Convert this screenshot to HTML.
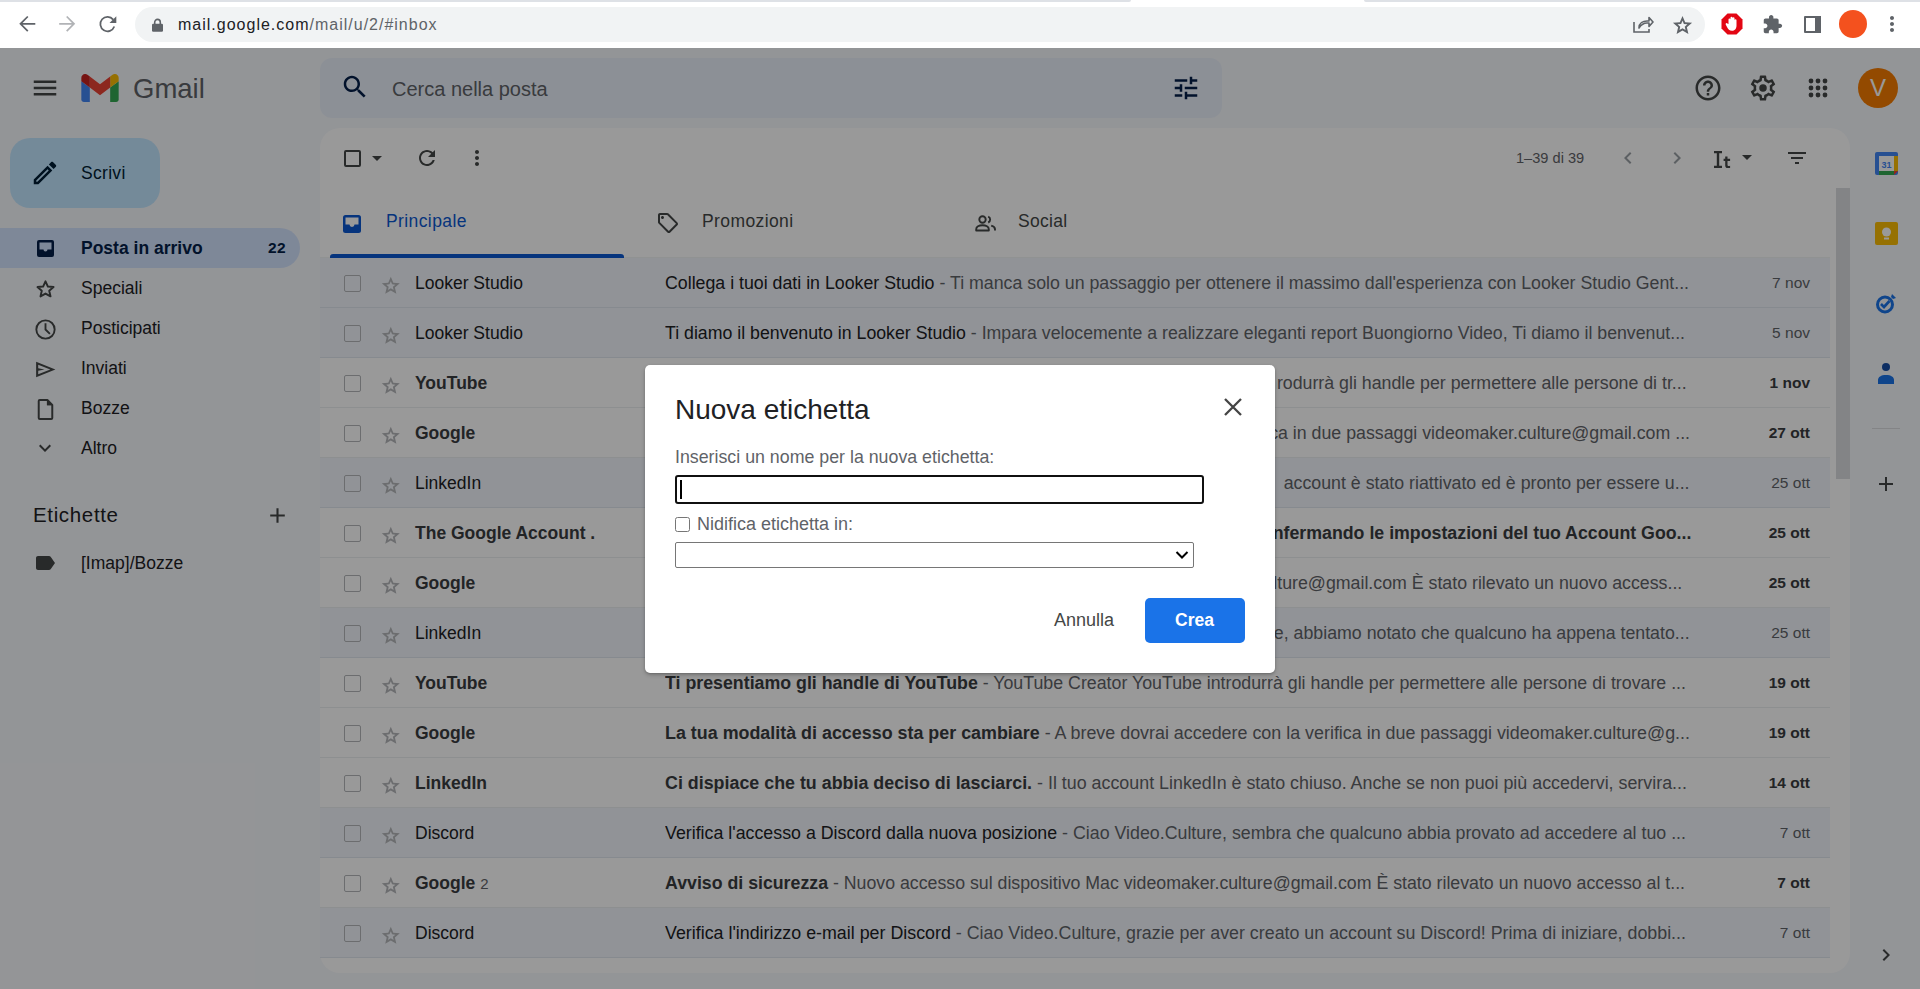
<!DOCTYPE html><html><head><meta charset="utf-8"><title>Gmail</title><style>
*{box-sizing:border-box}
html,body{margin:0;padding:0;width:1920px;height:989px;overflow:hidden;background:#f6f8fc;font-family:"Liberation Sans",sans-serif}
.t{position:absolute;white-space:nowrap;line-height:1}
.abs{position:absolute}
.row{position:absolute;left:320px;width:1510px;height:50px;box-shadow:inset 0 -1px 0 0 rgba(100,121,143,0.122)}
.row.r{background:rgba(242,246,252,1)}
.row.u{background:#fff}
.sn{position:absolute;white-space:nowrap;line-height:1;font-size:17.5px;transform-origin:0 0}
</style></head><body>
<div class="abs" style="left:0;top:0;width:1920px;height:48px;background:#fff"></div>
<div class="abs" style="left:0;top:0;width:1131px;height:2px;background:#dee1e6;border-bottom-right-radius:2px"></div>
<div class="abs" style="left:1364px;top:0;width:556px;height:2px;background:#dee1e6;border-bottom-left-radius:2px"></div>
<svg class="abs" style="left:0;top:0;width:130px;height:48px" viewBox="0 0 130 48" fill="none" stroke-width="1.75"><path d="M35.3 23.8H21.5M27.8 16.5l-7.3 7.3 7.3 7.3" stroke="#5f6368"/><path d="M59.2 23.8H73M66.7 16.5l7.3 7.3-7.3 7.3" stroke="#b1b3b6"/><path d="M114.3 26.5A7.2 7.2 0 1 1 113.2 19.6" stroke="#5f6368"/><path d="M116.3 16.2v6.8h-6.8z" fill="#5f6368"/></svg>
<div class="abs" style="left:135px;top:7px;width:1570px;height:35px;border-radius:17.5px;background:#f1f3f4"></div>
<svg class="abs" style="left:152px;top:18px;width:11px;height:14px" viewBox="0 0 11 14"><path d="M2.7 6V4.2a2.8 2.8 0 0 1 5.6 0V6" fill="none" stroke="#5f6368" stroke-width="1.6"/><rect x="0" y="5.8" width="11" height="8" rx="1.2" fill="#5f6368"/></svg>
<div class="t" style="left:178px;top:17.26px;font-size:16px;color:#202124;letter-spacing:1.0px;">mail.google.com<span style="color:#5f6368">/mail/u/2/#inbox</span></div>
<svg class="abs" style="left:1632px;top:14px;width:22px;height:20px" viewBox="0 0 22 20" fill="none" stroke="#5f6368" stroke-width="1.6"><path d="M2 8v10h15v-3"/><path d="M7 14c0-5 4-7 8-7h2V3.5l4 4.5-4 4.5V9h-2c-3 0-6 2-8 5z" stroke-linejoin="round"/></svg>
<svg class="abs" style="left:1671px;top:12.5px;width:23px;height:23px" viewBox="0 0 24 24" fill="#5f6368"><path fill-rule="evenodd" d="M8.85 17.825l3.15-1.9 3.150 1.925-.825-3.6 2.775-2.4-3.65-.325-1.45-3.4-1.45 3.375-3.65.325 2.775 2.425zM5.825 22l1.625-7.025L2 10.25l7.2-.625L12 3l2.8 6.625 7.2.625-5.45 4.725L18.175 22 12 18.275z"/></svg>
<svg class="abs" style="left:1721px;top:13px;width:22px;height:22px" viewBox="0 0 22 22"><polygon points="6.5,0.5 15.5,0.5 21.5,6.5 21.5,15.5 15.5,21.5 6.5,21.5 0.5,15.5 0.5,6.5" fill="#e30613"/><path d="M7.5 11V6.5a1 1 0 0 1 2 0V10V4.8a1 1 0 0 1 2 0V10V5.3a1 1 0 0 1 2 0V10.5V7.3a1 1 0 0 1 2 0v5.5c0 3-2 5-4.5 5S7 16 6 14l-1.3-2.6a1 1 0 0 1 1.7-1z" fill="#fff"/></svg>
<svg style="position:absolute;left:1762px;top:13.5px;width:21px;height:21px;" viewBox="0 0 24 24" fill="#5f6368"><path d="M20.5 11H19V7c0-1.1-.9-2-2-2h-4V3.5C13 2.12 11.88 1 10.5 1S8 2.12 8 3.5V5H4c-1.1 0-1.99.9-1.99 2v3.8H3.5c1.49 0 2.7 1.21 2.7 2.7s-1.21 2.7-2.7 2.7H2V20c0 1.1.9 2 2 2h3.8v-1.5c0-1.49 1.21-2.7 2.7-2.7 1.49 0 2.7 1.21 2.7 2.7V22H17c1.1 0 2-.9 2-2v-4h1.5c1.38 0 2.5-1.12 2.5-2.5S21.88 11 20.5 11z"/></svg>
<div class="abs" style="left:1804px;top:16px;width:17px;height:17px;border:2.2px solid #5f6368;border-radius:1px"></div><div class="abs" style="left:1815px;top:16px;width:6px;height:17px;background:#5f6368"></div>
<div class="abs" style="left:1839px;top:10px;width:28px;height:28px;border-radius:50%;background:#f4511e"></div>
<svg style="position:absolute;left:1880px;top:12px;width:24px;height:24px;" viewBox="0 0 24 24" fill="#5f6368"><path d="M12 8c1.1 0 2-.9 2-2s-.9-2-2-2-2 .9-2 2 .9 2 2 2zm0 2c-1.1 0-2 .9-2 2s.9 2 2 2 2-.9 2-2-.9-2-2-2zm0 6c-1.1 0-2 .9-2 2s.9 2 2 2 2-.9 2-2-.9-2-2-2z"/></svg>
<div class="abs" style="left:0;top:48px;width:1920px;height:941px;background:#f6f8fc"></div>
<svg style="position:absolute;left:30px;top:73px;width:30px;height:30px;" viewBox="0 0 24 24" fill="#444746"><path d="M3 18h18v-2H3v2zm0-5h18v-2H3v2zm0-7v2h18V6H3z"/></svg>
<svg class="abs" style="left:81px;top:74px;width:38px;height:28px" viewBox="52 42 88 66"><path fill="#4285f4" d="M58 108h14V74L52 59v43c0 3.32 2.69 6 6 6"/><path fill="#34a853" d="M120 108h14c3.32 0 6-2.690 6-6V59l-20 15"/><path fill="#fbbc04" d="M120 48v26l20-15v-8c0-7.42-8.47-11.65-14.4-7.2"/><path fill="#ea4335" d="M72 74V48l24 18 24-18v26L96 92"/><path fill="#c5221f" d="M52 51v8l20 15V48l-5.6-4.2c-5.94-4.45-14.4-.22-14.4 7.2"/></svg>
<div class="t" style="left:133px;top:74.72px;font-size:27.5px;color:#5f6368;">Gmail</div>
<div class="abs" style="left:320px;top:58px;width:902px;height:60px;border-radius:12px;background:#eaf1fb"></div>
<svg style="position:absolute;left:340px;top:72px;width:30px;height:30px;" viewBox="0 0 24 24" fill="#041e49"><path d="M15.5 14h-.79l-.28-.27C15.41 12.59 16 11.11 16 9.5 16 5.91 13.09 3 9.5 3S3 5.91 3 9.5 5.91 16 9.5 16c1.61 0 3.09-.59 4.23-1.57l.27.28v.79l5 4.99L20.49 19l-4.99-5zm-6 0C7.01 14 5 11.990 5 9.5S7.01 5 9.5 5 14 7.01 14 9.5 11.99 14 9.5 14z"/></svg>
<div class="t" style="left:392px;top:79.07px;font-size:20px;color:#5f6368;">Cerca nella posta</div>
<svg style="position:absolute;left:1171px;top:73px;width:30px;height:30px;" viewBox="0 0 24 24" fill="#041e49"><path d="M3 17v2h6v-2H3zM3 5v2h10V5H3zm10 16v-2h8v-2h-8v-2h-2v6h2zM7 9v2H3v2h4v2h2V9H7zm14 4v-2H11v2h10zm-6-4h2V7h4V5h-4V3h-2v6z"/></svg>
<svg style="position:absolute;left:1693px;top:73px;width:30px;height:30px;" viewBox="0 0 24 24" fill="#444746"><path d="M11 18h2v-2h-2v2zm1-16C6.48 2 2 6.48 2 12s4.48 10 10 10 10-4.48 10-10S17.520 2 12 2zm0 18c-4.41 0-8-3.59-8-8s3.59-8 8-8 8 3.59 8 8-3.59 8-8 8zm0-14c-2.21 0-4 1.79-4 4h2c0-1.1.9-2 2-2s2 .9 2 2c0 2-3 1.75-3 5h2c0-2.25 3-2.5 3-5 0-2.21-1.79-4-4-4z"/></svg>
<svg style="position:absolute;left:1748px;top:73px;width:30px;height:30px;" viewBox="0 0 24 24" fill="#444746"><path d="M19.43 12.98c.04-.32.07-.64.07-.98 0-.34-.03-.66-.07-.98l2.11-1.65c.19-.15.24-.42.12-.64l-2-3.46c-.09-.16-.26-.25-.44-.25-.06 0-.12.01-.17.03l-2.490 1c-.52-.4-1.08-.73-1.69-.98l-.38-2.65C14.46 2.18 14.25 2 14 2h-4c-.25 0-.46.18-.49.42l-.38 2.65c-.61.25-1.17.59-1.69.98l-2.49-1c-.06-.02-.12-.03-.18-.03-.17 0-.34.09-.43.25l-2 3.46c-.13.22-.07.49.12.64l2.11 1.65c-.04.32-.07.65-.07.98 0 .33.03.66.07.98l-2.11 1.65c-.19.15-.24.42-.12.64l2 3.46c.09.16.26.25.44.25.06 0 .12-.01.17-.03l2.49-1c.52.4 1.08.73 1.69.98l.38 2.65c.03.24.24.42.49.42h4c.25 0 .46-.18.49-.42l.38-2.65c.61-.25 1.17-.59 1.69-.98l2.49 1c.06.02.12.03.18.03.17 0 .34-.09.43-.25l2-3.46c.12-.22.07-.49-.12-.64l-2.11-1.65zm-1.98-1.71c.04.31.05.52.05.73 0 .21-.02.43-.05.73l-.14 1.13.89.7 1.08.84-.7 1.21-1.27-.51-1.04-.42-.9.68c-.43.32-.84.56-1.25.73l-1.06.43-.16 1.13-.2 1.35h-1.4l-.19-1.35-.16-1.13-1.06-.43c-.43-.18-.83-.41-1.23-.71l-.91-.7-1.06.43-1.27.51-.7-1.21 1.08-.84.89-.7-.14-1.13c-.03-.31-.05-.54-.05-.74s.02-.43.05-.73l.14-1.13-.89-.7-1.08-.84.7-1.21 1.27.51 1.04.42.9-.68c.43-.32.84-.56 1.25-.73l1.06-.43.16-1.13.2-1.35h1.39l.19 1.35.16 1.13 1.06.43c.43.18.83.41 1.23.71l.91.7 1.06-.43 1.27-.51.7 1.21-1.07.85-.89.7.14 1.13z"/><circle cx="12" cy="12" r="3"/></svg>
<svg class="abs" style="left:1808px;top:78px;width:20px;height:20px" viewBox="0 0 20 20" fill="#444746"><circle cx="3" cy="3" r="2.4"/><circle cx="3" cy="10" r="2.4"/><circle cx="3" cy="17" r="2.4"/><circle cx="10" cy="3" r="2.4"/><circle cx="10" cy="10" r="2.4"/><circle cx="10" cy="17" r="2.4"/><circle cx="17" cy="3" r="2.4"/><circle cx="17" cy="10" r="2.4"/><circle cx="17" cy="17" r="2.4"/></svg>
<div class="abs" style="left:1858px;top:68px;width:40px;height:40px;border-radius:50%;background:#f57c00"></div>
<div class="t" style="left:1858px;top:76px;width:40px;text-align:center;font-size:24px;color:#fff">V</div>
<div class="abs" style="left:10px;top:138px;width:150px;height:70px;border-radius:20px;background:#c2e7ff"></div>
<svg style="position:absolute;left:30px;top:158px;width:30px;height:30px;" viewBox="0 0 24 24" fill="#001d35"><path d="M3 17.25V21h3.75L17.81 9.94l-3.75-3.75L3 17.25zM5.92 19H5v-.92l9.06-9.06.92.92L5.92 19zM20.71 5.63l-2.34-2.34c-.2-.2-.45-.29-.71-.29s-.51.1-.7.29l-1.83 1.830 3.75 3.75 1.83-1.83c.39-.39.39-1.02 0-1.41z"/></svg>
<div class="t" style="left:81px;top:165.19px;font-size:17.5px;color:#001d35;letter-spacing:0.3px;">Scrivi</div>
<div class="abs" style="left:0;top:228px;width:300px;height:40px;border-radius:0 20px 20px 0;background:#d3e3fd"></div>
<svg class="abs" style="left:36px;top:239px;width:19px;height:19px" viewBox="0 0 19 19"><rect x="1" y="1" width="17" height="17" rx="2" fill="#041e49"/><path d="M3.5 3.5h12v7h-4a2 2 0 0 1-4 0h-4z" fill="#d3e3fd"/></svg>
<div class="t" style="left:81px;top:240.19px;font-size:17.5px;color:#041e49;font-weight:700;">Posta in arrivo</div>
<div class="t" style="left:268px;top:239.88px;font-size:15.5px;color:#041e49;font-weight:700;letter-spacing:0.3px;">22</div>
<svg class="abs" style="left:33px;top:277px;width:25px;height:25px" viewBox="0 0 24 24" fill="none" stroke="#444746" stroke-width="1.9" stroke-linejoin="round"><path d="M12 4.2l2.3 5 5.4.5-4.1 3.6 1.2 5.3L12 15.9l-4.8 2.7 1.2-5.3-4.1-3.6 5.4-.5z"/></svg>
<div class="t" style="left:81px;top:280.19px;font-size:17.5px;color:#202124;">Speciali</div>
<svg class="abs" style="left:33px;top:317px;width:25px;height:25px" viewBox="0 0 24 24" fill="none" stroke="#444746" stroke-width="1.8"><circle cx="12" cy="12" r="8.8"/><path d="M12 6.8V12l3.6 3.6" stroke-linecap="square"/></svg>
<div class="t" style="left:81px;top:320.19px;font-size:17.5px;color:#202124;">Posticipati</div>
<svg class="abs" style="left:33px;top:357px;width:25px;height:25px" viewBox="0 0 24 24" fill="#444746"><path fill-rule="evenodd" d="M3 19.5V4.5L21.5 12zM5 16.5L16.6 12 5 7.5v3.2l6 1.3-6 1.3z"/></svg>
<div class="t" style="left:81px;top:360.19px;font-size:17.5px;color:#202124;">Inviati</div>
<svg class="abs" style="left:33px;top:397px;width:25px;height:25px" viewBox="0 0 24 24" fill="none" stroke="#444746" stroke-width="1.9" stroke-linejoin="round"><path d="M6.5 2.9h7.3l4.7 4.7v12.5a1 1 0 0 1-1 1H6.5a1 1 0 0 1-1-1V3.9a1 1 0 0 1 1-1z"/><path d="M13.3 3v5h5" fill="#444746" stroke="none"/><path d="M13.5 3l5 5h-5z" fill="#444746" stroke="none"/></svg>
<div class="t" style="left:81px;top:400.19px;font-size:17.5px;color:#202124;">Bozze</div>
<svg style="position:absolute;left:33px;top:436px;width:24px;height:24px;" viewBox="0 0 24 24" fill="#444746"><path d="M16.59 8.59L12 13.17 7.41 8.59 6 10l6 6 6-6z"/></svg>
<div class="t" style="left:81px;top:440.19px;font-size:17.5px;color:#202124;">Altro</div>
<div class="t" style="left:33px;top:504.65px;font-size:20.5px;color:#202124;letter-spacing:0.65px;">Etichette</div>
<svg style="position:absolute;left:265px;top:503px;width:25px;height:25px;" viewBox="0 0 24 24" fill="#444746"><path d="M19 13h-6v6h-2v-6H5v-2h6V5h2v6h6v2z"/></svg>
<svg style="position:absolute;left:33px;top:551px;width:24px;height:24px;" viewBox="0 0 24 24" fill="#444746"><path d="M17.63 5.84C17.27 5.33 16.67 5 16 5L5 5.01C3.9 5.010 3 5.9 3 7v10c0 1.1.9 1.99 2 1.99L16 19c.67 0 1.27-.33 1.63-.84L22 12l-4.37-6.16z"/></svg>
<div class="t" style="left:81px;top:555.19px;font-size:17.5px;color:#202124;">[Imap]/Bozze</div>
<div class="abs" style="left:320px;top:128px;width:1530px;height:845px;border-radius:20px;background:#fff"></div>
<div class="abs" style="left:344px;top:150px;width:17px;height:17px;border:2.1px solid #444746;border-radius:2px"></div>
<svg style="position:absolute;left:365px;top:146px;width:24px;height:24px;" viewBox="0 0 24 24" fill="#444746"><path d="M7 10l5 5 5-5z"/></svg>
<svg style="position:absolute;left:415px;top:146px;width:24px;height:24px;" viewBox="0 0 24 24" fill="#444746"><path d="M17.65 6.35C16.2 4.9 14.21 4 12 4c-4.42 0-7.99 3.58-7.99 8s3.57 8 7.990 8c3.73 0 6.84-2.55 7.73-6h-2.08c-.82 2.33-3.04 4-5.65 4-3.31 0-6-2.69-6-6s2.69-6 6-6c1.66 0 3.14.69 4.22 1.78L13 11h7V4l-2.35 2.35z"/></svg>
<svg style="position:absolute;left:465px;top:146px;width:24px;height:24px;" viewBox="0 0 24 24" fill="#444746"><path d="M12 8c1.1 0 2-.9 2-2s-.9-2-2-2-2 .9-2 2 .9 2 2 2zm0 2c-1.1 0-2 .9-2 2s.9 2 2 2 2-.9 2-2-.9-2-2-2zm0 6c-1.1 0-2 .9-2 2s.9 2 2 2 2-.9 2-2-.9-2-2-2z"/></svg>
<div class="t" style="left:1516px;top:151.04px;font-size:14.6px;color:#5f6368;">1–39 di 39</div>
<svg style="position:absolute;left:1616px;top:146px;width:24px;height:24px;" viewBox="0 0 24 24" fill="#9aa0a6"><path d="M15.41 7.41L14 6l-6 6 6 6 1.41-1.41L10.83 12z"/></svg>
<svg style="position:absolute;left:1665px;top:146px;width:24px;height:24px;" viewBox="0 0 24 24" fill="#9aa0a6"><path d="M10 6L8.59 7.41 13.17 12l-4.58 4.59L10 18l6-6z"/></svg>
<svg class="abs" style="left:1713px;top:151px;width:20px;height:17px" viewBox="0 0 20 17" fill="#444746"><path d="M1 0h8v2.2H6.2v12.6H9V17H1v-2.2h2.8V2.2H1z"/><path d="M12.2 5.5h2.3v2.3h2.6v2.1h-2.6v3.8c0 .9.4 1.2 1.2 1.2.5 0 .9-.1 1.4-.2V17c-.6.2-1.2.2-1.9.2-2 0-3-.9-3-3V9.9h-1.6V7.8h1.6z"/></svg>
<svg style="position:absolute;left:1735px;top:144.5px;width:24px;height:24px;" viewBox="0 0 24 24" fill="#444746"><path d="M7 10l5 5 5-5z"/></svg>
<svg style="position:absolute;left:1785px;top:146px;width:24px;height:24px;" viewBox="0 0 24 24" fill="#444746"><path d="M10 18h4v-2h-4v2zM3 6v2h18V6H3zm3 7h12v-2H6v2z"/></svg>
<div class="abs" style="left:1836px;top:188px;width:14px;height:291px;background:#dadce0"></div>
<div class="abs" style="left:320px;top:257px;width:1510px;height:1px;background:#f1f3f4"></div>
<svg class="abs" style="left:343px;top:215px;width:18px;height:18px" viewBox="0 0 18 18"><rect x="0" y="0" width="18" height="18" rx="2.5" fill="#0b57d0"/><path d="M2.5 2.5h13v7h-4a2.5 2.5 0 0 1-5 0h-4z" fill="#fff"/></svg>
<div class="t" style="left:386px;top:213.39px;font-size:17.5px;color:#0b57d0;letter-spacing:0.4px;">Principale</div>
<div class="abs" style="left:330px;top:254px;width:294px;height:4px;border-radius:3px 3px 0 0;background:#0b57d0"></div>
<svg style="position:absolute;left:656px;top:211px;width:24px;height:24px;" viewBox="0 0 24 24" fill="#444746"><path d="M21.41 11.41l-8.83-8.83c-.37-.37-.88-.58-1.41-.58H4c-1.1 0-2 .9-2 2v7.17c0 .53.21 1.04.59 1.41l8.83 8.83c.78.78 2.05.78 2.83 0l7.17-7.17c.78-.78.78-2.04-.01-2.83zM12.83 20L4 11.17V4h7.17L20 12.83 12.83 20zM6.5 5C7.33 5 8 5.67 8 6.5S7.33 8 6.5 8 5 7.33 5 6.5 5.67 5 6.5 5z"/></svg>
<div class="t" style="left:702px;top:213.39px;font-size:17.5px;color:#444746;letter-spacing:0.4px;">Promozioni</div>
<svg class="abs" style="left:975px;top:215px;width:22px;height:17px" viewBox="0 0 22 17" fill="none" stroke="#444746" stroke-width="1.9"><circle cx="7.5" cy="4.5" r="3.2"/><path d="M1.2 15.5v-1.3c0-2.3 2.8-3.9 6.3-3.9s6.3 1.6 6.3 3.9v1.3z" stroke-linejoin="round"/><path d="M13.2 1.6a3.2 3.2 0 0 1 0 5.9"/><path d="M16.2 10.6c2.2.6 3.8 1.9 3.8 3.6v1.3"/></svg>
<div class="t" style="left:1018px;top:213.39px;font-size:17.5px;color:#444746;letter-spacing:0.3px;">Social</div>
<div class="row r" style="top:258px"></div>
<div class="abs" style="left:344px;top:275px;width:17px;height:17px;border:1.9px solid #b4b6b9;border-radius:2px"></div>
<svg class="abs" style="left:380px;top:273.5px;width:21.6px;height:21.6px" viewBox="0 0 24 24" fill="#b4b6b9"><path fill-rule="evenodd" d="M8.85 17.825l3.15-1.9 3.15 1.925-.825-3.6 2.775-2.4-3.65-.325-1.45-3.4-1.45 3.375-3.65.325 2.775 2.425zM5.825 22l1.625-7.025L2 10.25l7.2-.625L12 3l2.8 6.625 7.2.625-5.45 4.725L18.175 22 12 18.275z"/></svg>
<div class="t" style="left:415px;top:275.19px;font-size:17.5px;color:#202124;">Looker Studio</div>
<div class="sn" id="sn0" style="left:665px;top:275.19px;font-weight:400;color:#202124;transform:scaleX(1.0147)">Collega i tuoi dati in Looker Studio<span style="color:#5f6368;font-weight:400"> - Ti manca solo un passaggio per ottenere il massimo dall'esperienza con Looker Studio Gent...</span></div>
<div class="t" style="right:110px;top:274.88px;font-size:15.5px;font-weight:400;color:#5f6368">7 nov</div>
<div class="row r" style="top:308px"></div>
<div class="abs" style="left:344px;top:325px;width:17px;height:17px;border:1.9px solid #b4b6b9;border-radius:2px"></div>
<svg class="abs" style="left:380px;top:323.5px;width:21.6px;height:21.6px" viewBox="0 0 24 24" fill="#b4b6b9"><path fill-rule="evenodd" d="M8.85 17.825l3.15-1.9 3.15 1.925-.825-3.6 2.775-2.4-3.65-.325-1.45-3.4-1.45 3.375-3.65.325 2.775 2.425zM5.825 22l1.625-7.025L2 10.25l7.2-.625L12 3l2.8 6.625 7.2.625-5.45 4.725L18.175 22 12 18.275z"/></svg>
<div class="t" style="left:415px;top:325.19px;font-size:17.5px;color:#202124;">Looker Studio</div>
<div class="sn" id="sn1" style="left:665px;top:325.19px;font-weight:400;color:#202124;transform:scaleX(1.0131)">Ti diamo il benvenuto in Looker Studio<span style="color:#5f6368;font-weight:400"> - Impara velocemente a realizzare eleganti report Buongiorno Video, Ti diamo il benvenut...</span></div>
<div class="t" style="right:110px;top:324.88px;font-size:15.5px;font-weight:400;color:#5f6368">5 nov</div>
<div class="row u" style="top:358px"></div>
<div class="abs" style="left:344px;top:375px;width:17px;height:17px;border:1.9px solid #b4b6b9;border-radius:2px"></div>
<svg class="abs" style="left:380px;top:373.5px;width:21.6px;height:21.6px" viewBox="0 0 24 24" fill="#b4b6b9"><path fill-rule="evenodd" d="M8.85 17.825l3.15-1.9 3.15 1.925-.825-3.6 2.775-2.4-3.65-.325-1.45-3.4-1.45 3.375-3.65.325 2.775 2.425zM5.825 22l1.625-7.025L2 10.25l7.2-.625L12 3l2.8 6.625 7.2.625-5.45 4.725L18.175 22 12 18.275z"/></svg>
<div class="t" style="left:415px;top:375.19px;font-size:17.5px;color:#3a3c40;font-weight:700;">YouTube</div>
<div class="abs" style="left:1276px;top:358px;width:431px;height:50px;overflow:hidden"><div class="sn" id="sn2" style="right:20px;top:17.19px;font-weight:700;color:#3a3c40;transform-origin:100% 0;transform:scaleX(1.015)">Ti presentiamo gli handle di YouTube<span style="color:#5f6368;font-weight:400"> - YouTube Creator YouTube inrodurrà gli handle per permettere alle persone di tr...</span></div></div>
<div class="t" style="right:110px;top:374.88px;font-size:15.5px;font-weight:700;color:#3a3c40">1 nov</div>
<div class="row u" style="top:408px"></div>
<div class="abs" style="left:344px;top:425px;width:17px;height:17px;border:1.9px solid #b4b6b9;border-radius:2px"></div>
<svg class="abs" style="left:380px;top:423.5px;width:21.6px;height:21.6px" viewBox="0 0 24 24" fill="#b4b6b9"><path fill-rule="evenodd" d="M8.85 17.825l3.15-1.9 3.15 1.925-.825-3.6 2.775-2.4-3.65-.325-1.45-3.4-1.45 3.375-3.65.325 2.775 2.425zM5.825 22l1.625-7.025L2 10.25l7.2-.625L12 3l2.8 6.625 7.2.625-5.45 4.725L18.175 22 12 18.275z"/></svg>
<div class="t" style="left:415px;top:425.19px;font-size:17.5px;color:#3a3c40;font-weight:700;">Google</div>
<div class="abs" style="left:1275px;top:408px;width:435px;height:50px;overflow:hidden"><div class="sn" id="sn3" style="right:20px;top:17.19px;font-weight:700;color:#3a3c40;transform-origin:100% 0;transform:scaleX(1.015)">La tua modalità di accesso sta per cambiare<span style="color:#5f6368;font-weight:400"> - A breve dovrai accedere con la verifica in due passaggi videomaker.culture@gmail.com ...</span></div></div>
<div class="t" style="right:110px;top:424.88px;font-size:15.5px;font-weight:700;color:#3a3c40">27 ott</div>
<div class="row r" style="top:458px"></div>
<div class="abs" style="left:344px;top:475px;width:17px;height:17px;border:1.9px solid #b4b6b9;border-radius:2px"></div>
<svg class="abs" style="left:380px;top:473.5px;width:21.6px;height:21.6px" viewBox="0 0 24 24" fill="#b4b6b9"><path fill-rule="evenodd" d="M8.85 17.825l3.15-1.9 3.15 1.925-.825-3.6 2.775-2.4-3.65-.325-1.45-3.4-1.45 3.375-3.65.325 2.775 2.425zM5.825 22l1.625-7.025L2 10.25l7.2-.625L12 3l2.8 6.625 7.2.625-5.45 4.725L18.175 22 12 18.275z"/></svg>
<div class="t" style="left:415px;top:475.19px;font-size:17.5px;color:#202124;">LinkedIn</div>
<div class="abs" style="left:1281px;top:458px;width:429px;height:50px;overflow:hidden"><div class="sn" id="sn4" style="right:20px;top:17.19px;font-weight:400;color:#202124;transform-origin:100% 0;transform:scaleX(1.015)">Il tuo account è stato riattivato<span style="color:#5f6368;font-weight:400"> - Ciao Video, il account è stato riattivato ed è pronto per essere u...</span></div></div>
<div class="t" style="right:110px;top:474.88px;font-size:15.5px;font-weight:400;color:#5f6368">25 ott</div>
<div class="row u" style="top:508px"></div>
<div class="abs" style="left:344px;top:525px;width:17px;height:17px;border:1.9px solid #b4b6b9;border-radius:2px"></div>
<svg class="abs" style="left:380px;top:523.5px;width:21.6px;height:21.6px" viewBox="0 0 24 24" fill="#b4b6b9"><path fill-rule="evenodd" d="M8.85 17.825l3.15-1.9 3.15 1.925-.825-3.6 2.775-2.4-3.65-.325-1.45-3.4-1.45 3.375-3.65.325 2.775 2.425zM5.825 22l1.625-7.025L2 10.25l7.2-.625L12 3l2.8 6.625 7.2.625-5.45 4.725L18.175 22 12 18.275z"/></svg>
<div class="t" style="left:415px;top:525.19px;font-size:17.5px;color:#3a3c40;font-weight:700;">The Google Account .</div>
<div class="abs" style="left:1275px;top:508px;width:436px;height:50px;overflow:hidden"><div class="sn" id="sn5" style="right:20px;top:17.19px;font-weight:700;color:#3a3c40;transform-origin:100% 0;transform:scaleX(1.015)">Proteggi il tuo account confermando le impostazioni del tuo Account Goo...</div></div>
<div class="t" style="right:110px;top:524.88px;font-size:15.5px;font-weight:700;color:#3a3c40">25 ott</div>
<div class="row u" style="top:558px"></div>
<div class="abs" style="left:344px;top:575px;width:17px;height:17px;border:1.9px solid #b4b6b9;border-radius:2px"></div>
<svg class="abs" style="left:380px;top:573.5px;width:21.6px;height:21.6px" viewBox="0 0 24 24" fill="#b4b6b9"><path fill-rule="evenodd" d="M8.85 17.825l3.15-1.9 3.15 1.925-.825-3.6 2.775-2.4-3.65-.325-1.45-3.4-1.45 3.375-3.65.325 2.775 2.425zM5.825 22l1.625-7.025L2 10.25l7.2-.625L12 3l2.8 6.625 7.2.625-5.45 4.725L18.175 22 12 18.275z"/></svg>
<div class="t" style="left:415px;top:575.19px;font-size:17.5px;color:#3a3c40;font-weight:700;">Google</div>
<div class="abs" style="left:1275px;top:558px;width:427px;height:50px;overflow:hidden"><div class="sn" id="sn6" style="right:20px;top:17.19px;font-weight:700;color:#3a3c40;transform-origin:100% 0;transform:scaleX(1.015)">Avviso di sicurezza<span style="color:#5f6368;font-weight:400"> - Nuovo accesso sul dispositivo Windows videomaker.culture@gmail.com È stato rilevato un nuovo access...</span></div></div>
<div class="t" style="right:110px;top:574.88px;font-size:15.5px;font-weight:700;color:#3a3c40">25 ott</div>
<div class="row r" style="top:608px"></div>
<div class="abs" style="left:344px;top:625px;width:17px;height:17px;border:1.9px solid #b4b6b9;border-radius:2px"></div>
<svg class="abs" style="left:380px;top:623.5px;width:21.6px;height:21.6px" viewBox="0 0 24 24" fill="#b4b6b9"><path fill-rule="evenodd" d="M8.85 17.825l3.15-1.9 3.15 1.925-.825-3.6 2.775-2.4-3.65-.325-1.45-3.4-1.45 3.375-3.65.325 2.775 2.425zM5.825 22l1.625-7.025L2 10.25l7.2-.625L12 3l2.8 6.625 7.2.625-5.45 4.725L18.175 22 12 18.275z"/></svg>
<div class="t" style="left:415px;top:625.19px;font-size:17.5px;color:#202124;">LinkedIn</div>
<div class="abs" style="left:1275px;top:608px;width:435px;height:50px;overflow:hidden"><div class="sn" id="sn7" style="right:20px;top:17.19px;font-weight:400;color:#202124;transform-origin:100% 0;transform:scaleX(1.015)">Tentativo di accesso<span style="color:#5f6368;font-weight:400"> - Ciao Video.Culture, abbiamo notato che qualcuno ha appena tentato...</span></div></div>
<div class="t" style="right:110px;top:624.88px;font-size:15.5px;font-weight:400;color:#5f6368">25 ott</div>
<div class="row u" style="top:658px"></div>
<div class="abs" style="left:344px;top:675px;width:17px;height:17px;border:1.9px solid #b4b6b9;border-radius:2px"></div>
<svg class="abs" style="left:380px;top:673.5px;width:21.6px;height:21.6px" viewBox="0 0 24 24" fill="#b4b6b9"><path fill-rule="evenodd" d="M8.85 17.825l3.15-1.9 3.15 1.925-.825-3.6 2.775-2.4-3.65-.325-1.45-3.4-1.45 3.375-3.65.325 2.775 2.425zM5.825 22l1.625-7.025L2 10.25l7.2-.625L12 3l2.8 6.625 7.2.625-5.45 4.725L18.175 22 12 18.275z"/></svg>
<div class="t" style="left:415px;top:675.19px;font-size:17.5px;color:#3a3c40;font-weight:700;">YouTube</div>
<div class="sn" id="sn8" style="left:665px;top:675.19px;font-weight:700;color:#3a3c40;transform:scaleX(1.0158)">Ti presentiamo gli handle di YouTube<span style="color:#5f6368;font-weight:400"> - YouTube Creator YouTube introdurrà gli handle per permettere alle persone di trovare ...</span></div>
<div class="t" style="right:110px;top:674.88px;font-size:15.5px;font-weight:700;color:#3a3c40">19 ott</div>
<div class="row u" style="top:708px"></div>
<div class="abs" style="left:344px;top:725px;width:17px;height:17px;border:1.9px solid #b4b6b9;border-radius:2px"></div>
<svg class="abs" style="left:380px;top:723.5px;width:21.6px;height:21.6px" viewBox="0 0 24 24" fill="#b4b6b9"><path fill-rule="evenodd" d="M8.85 17.825l3.15-1.9 3.15 1.925-.825-3.6 2.775-2.4-3.65-.325-1.45-3.4-1.45 3.375-3.65.325 2.775 2.425zM5.825 22l1.625-7.025L2 10.25l7.2-.625L12 3l2.8 6.625 7.2.625-5.45 4.725L18.175 22 12 18.275z"/></svg>
<div class="t" style="left:415px;top:725.19px;font-size:17.5px;color:#3a3c40;font-weight:700;">Google</div>
<div class="sn" id="sn9" style="left:665px;top:725.19px;font-weight:700;color:#3a3c40;transform:scaleX(1.0218)">La tua modalità di accesso sta per cambiare<span style="color:#5f6368;font-weight:400"> - A breve dovrai accedere con la verifica in due passaggi videomaker.culture@g...</span></div>
<div class="t" style="right:110px;top:724.88px;font-size:15.5px;font-weight:700;color:#3a3c40">19 ott</div>
<div class="row u" style="top:758px"></div>
<div class="abs" style="left:344px;top:775px;width:17px;height:17px;border:1.9px solid #b4b6b9;border-radius:2px"></div>
<svg class="abs" style="left:380px;top:773.5px;width:21.6px;height:21.6px" viewBox="0 0 24 24" fill="#b4b6b9"><path fill-rule="evenodd" d="M8.85 17.825l3.15-1.9 3.15 1.925-.825-3.6 2.775-2.4-3.65-.325-1.45-3.4-1.45 3.375-3.65.325 2.775 2.425zM5.825 22l1.625-7.025L2 10.25l7.2-.625L12 3l2.8 6.625 7.2.625-5.45 4.725L18.175 22 12 18.275z"/></svg>
<div class="t" style="left:415px;top:775.19px;font-size:17.5px;color:#3a3c40;font-weight:700;">LinkedIn</div>
<div class="sn" id="sn10" style="left:665px;top:775.19px;font-weight:700;color:#3a3c40;transform:scaleX(1.0200)">Ci dispiace che tu abbia deciso di lasciarci.<span style="color:#5f6368;font-weight:400"> - Il tuo account LinkedIn è stato chiuso. Anche se non puoi più accedervi, servira...</span></div>
<div class="t" style="right:110px;top:774.88px;font-size:15.5px;font-weight:700;color:#3a3c40">14 ott</div>
<div class="row r" style="top:808px"></div>
<div class="abs" style="left:344px;top:825px;width:17px;height:17px;border:1.9px solid #b4b6b9;border-radius:2px"></div>
<svg class="abs" style="left:380px;top:823.5px;width:21.6px;height:21.6px" viewBox="0 0 24 24" fill="#b4b6b9"><path fill-rule="evenodd" d="M8.85 17.825l3.15-1.9 3.15 1.925-.825-3.6 2.775-2.4-3.65-.325-1.45-3.4-1.45 3.375-3.65.325 2.775 2.425zM5.825 22l1.625-7.025L2 10.25l7.2-.625L12 3l2.8 6.625 7.2.625-5.45 4.725L18.175 22 12 18.275z"/></svg>
<div class="t" style="left:415px;top:825.19px;font-size:17.5px;color:#202124;">Discord</div>
<div class="sn" id="sn11" style="left:665px;top:825.19px;font-weight:400;color:#202124;transform:scaleX(1.0169)">Verifica l'accesso a Discord dalla nuova posizione<span style="color:#5f6368;font-weight:400"> - Ciao Video.Culture, sembra che qualcuno abbia provato ad accedere al tuo ...</span></div>
<div class="t" style="right:110px;top:824.88px;font-size:15.5px;font-weight:400;color:#5f6368">7 ott</div>
<div class="row u" style="top:858px"></div>
<div class="abs" style="left:344px;top:875px;width:17px;height:17px;border:1.9px solid #b4b6b9;border-radius:2px"></div>
<svg class="abs" style="left:380px;top:873.5px;width:21.6px;height:21.6px" viewBox="0 0 24 24" fill="#b4b6b9"><path fill-rule="evenodd" d="M8.85 17.825l3.15-1.9 3.15 1.925-.825-3.6 2.775-2.4-3.65-.325-1.45-3.4-1.45 3.375-3.65.325 2.775 2.425zM5.825 22l1.625-7.025L2 10.25l7.2-.625L12 3l2.8 6.625 7.2.625-5.45 4.725L18.175 22 12 18.275z"/></svg>
<div class="t" style="left:415px;top:875.19px;font-size:17.5px;color:#3a3c40;font-weight:700;">Google <span style="font-weight:400;font-size:15px;color:#5f6368">2</span></div>
<div class="sn" id="sn12" style="left:665px;top:875.19px;font-weight:700;color:#3a3c40;transform:scaleX(1.0136)">Avviso di sicurezza<span style="color:#5f6368;font-weight:400"> - Nuovo accesso sul dispositivo Mac videomaker.culture@gmail.com È stato rilevato un nuovo accesso al t...</span></div>
<div class="t" style="right:110px;top:874.88px;font-size:15.5px;font-weight:700;color:#3a3c40">7 ott</div>
<div class="row r" style="top:908px"></div>
<div class="abs" style="left:344px;top:925px;width:17px;height:17px;border:1.9px solid #b4b6b9;border-radius:2px"></div>
<svg class="abs" style="left:380px;top:923.5px;width:21.6px;height:21.6px" viewBox="0 0 24 24" fill="#b4b6b9"><path fill-rule="evenodd" d="M8.85 17.825l3.15-1.9 3.15 1.925-.825-3.6 2.775-2.4-3.65-.325-1.45-3.4-1.45 3.375-3.65.325 2.775 2.425zM5.825 22l1.625-7.025L2 10.25l7.2-.625L12 3l2.8 6.625 7.2.625-5.45 4.725L18.175 22 12 18.275z"/></svg>
<div class="t" style="left:415px;top:925.19px;font-size:17.5px;color:#202124;">Discord</div>
<div class="sn" id="sn13" style="left:665px;top:925.19px;font-weight:400;color:#202124;transform:scaleX(1.0190)">Verifica l'indirizzo e-mail per Discord<span style="color:#5f6368;font-weight:400"> - Ciao Video.Culture, grazie per aver creato un account su Discord! Prima di iniziare, dobbi...</span></div>
<div class="t" style="right:110px;top:924.88px;font-size:15.5px;font-weight:400;color:#5f6368">7 ott</div>
<svg class="abs" style="left:1875px;top:152px;width:23px;height:23px" viewBox="0 0 23 23"><rect x="0" y="0" width="23" height="23" rx="2" fill="#4285f4"/><rect x="4" y="4" width="15" height="15" fill="#fff"/><rect x="19" y="4" width="4" height="15" fill="#fbbc04"/><rect x="4" y="19" width="15" height="4" fill="#34a853"/><path d="M19 19h4l-4 4z" fill="#ea4335"/><text x="11.5" y="16" font-size="9" font-family="Liberation Sans" font-weight="700" fill="#4285f4" text-anchor="middle">31</text></svg>
<svg class="abs" style="left:1875px;top:222px;width:23px;height:23px" viewBox="0 0 23 23"><rect x="0" y="0" width="23" height="23" rx="2" fill="#fbbc04"/><circle cx="11.5" cy="10" r="4.5" fill="#fff"/><rect x="9" y="15.5" width="5" height="2" fill="#fff"/></svg>
<svg class="abs" style="left:1875px;top:293px;width:23px;height:21px" viewBox="0 0 23 21"><circle cx="10" cy="11.5" r="7.5" fill="none" stroke="#1a73e8" stroke-width="3"/><path d="M6 11l3 3 5.5-6" fill="none" stroke="#1a73e8" stroke-width="2.6"/><path d="M17 1l4 4-3 1-2-2z" fill="#1a73e8"/></svg>
<svg class="abs" style="left:1877px;top:363px;width:18px;height:21px" viewBox="0 0 18 21"><circle cx="9" cy="4" r="4" fill="#174ea6"/><path d="M1 21v-4c0-3 3-5 8-5s8 2 8 5v4z" fill="#1a73e8"/></svg>
<div class="abs" style="left:1872px;top:428px;width:28px;height:1px;background:#dadce0"></div>
<svg style="position:absolute;left:1874px;top:472px;width:24px;height:24px;" viewBox="0 0 24 24" fill="#444746"><path d="M19 13h-6v6h-2v-6H5v-2h6V5h2v6h6v2z"/></svg>
<svg style="position:absolute;left:1874px;top:943px;width:24px;height:24px;" viewBox="0 0 24 24" fill="#444746"><path d="M10 6L8.59 7.41 13.17 12l-4.58 4.59L10 18l6-6z"/></svg>
<div class="abs" style="left:0;top:48px;width:1920px;height:941px;background:rgba(0,0,0,0.4)"></div>
<div class="abs" style="left:645px;top:365px;width:630px;height:308px;border-radius:5px;background:#fff;box-shadow:0 2px 4px rgba(0,0,0,.2),0 1px 2px rgba(0,0,0,.15)"></div>
<div class="t" style="left:675px;top:395.60px;font-size:28px;color:#202124;">Nuova etichetta</div>
<svg class="abs" style="left:1221px;top:395px;width:24px;height:24px" viewBox="0 0 24 24" stroke="#444" stroke-width="2.3" fill="none"><path d="M4 4L20 20M20 4L4 20"/></svg>
<div class="t" style="left:675px;top:448.93px;font-size:17.8px;color:#5f6368;">Inserisci un nome per la nuova etichetta:</div>
<div class="abs" style="left:675px;top:475px;width:529px;height:29px;border:2.5px solid #101010;border-radius:3px;background:#fff"></div>
<div class="abs" style="left:680px;top:480px;width:1.5px;height:19px;background:#000"></div>
<div class="abs" style="left:675px;top:516.5px;width:15px;height:15px;border:1.3px solid #767676;border-radius:2.5px;background:#fff"></div>
<div class="t" style="left:697px;top:514.76px;font-size:18px;color:#5f6368;">Nidifica etichetta in:</div>
<div class="abs" style="left:675px;top:542px;width:519px;height:26px;border:1.3px solid #767676;border-radius:2px;background:#fff"></div>
<svg class="abs" style="left:1175px;top:550px;width:14px;height:10px" viewBox="0 0 14 10" fill="none" stroke="#000" stroke-width="2"><path d="M1.5 2l5.5 5.5L12.5 2"/></svg>
<div class="t" style="left:1054px;top:610.76px;font-size:18px;color:#444746;">Annulla</div>
<div class="abs" style="left:1145px;top:598px;width:100px;height:45px;border-radius:5px;background:#1a73e8"></div>
<div class="t" style="left:1175px;top:612.19px;font-size:17.5px;color:#fff;font-weight:700;">Crea</div>
</body></html>
